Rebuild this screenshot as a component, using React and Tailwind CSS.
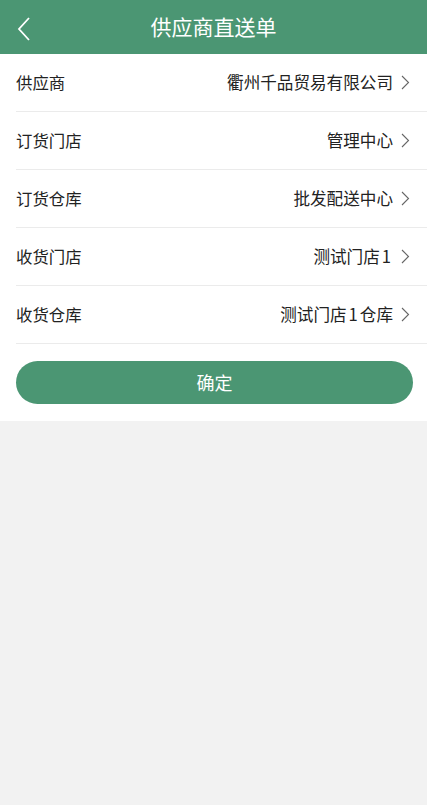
import React from "react";

const rows = [
  ["供应商", "衢州千品贸易有限公司"],
  ["订货门店", "管理中心"],
  ["订货仓库", "批发配送中心"],
  ["收货门店", ["测试门店", "1", ""]],
  ["收货仓库", ["测试门店", "1", "仓库"]],
];

function Chevron() {
  return (
    <svg width="9" height="15" viewBox="0 0 9 15" className="ml-[8px] shrink-0">
      <path d="M1 1 L7.5 7.5 L1 14" fill="none" stroke="#666" strokeWidth="1.1" />
    </svg>
  );
}

export default function App() {
  return (
    <div
      className="min-h-[805px] w-full bg-[#f2f2f2]"
      style={{ fontFamily: '"Noto Sans CJK SC", "Noto Sans", sans-serif' }}
    >
      <div className="relative flex h-[54px] items-center justify-center bg-[#4b9673]">
        <svg width="14" height="24" viewBox="0 0 14 24" className="absolute left-[17px] top-[17px]">
          <path d="M12 1 L2 12 L12 23" fill="none" stroke="#fff" strokeWidth="1.8" />
        </svg>
        <span className="text-[21px] text-white">供应商直送单</span>
      </div>
      <div className="bg-white pb-[17px]">
        {rows.map(([k, v]) => (
          <div key={k} className="ml-[16px] flex h-[58px] items-center border-b border-[#ebebeb] pr-[17px]">
            <span className="text-[16.4px] text-[#222]">{k}</span>
            <div className="ml-auto flex items-center">
              {typeof v === "string" ? (
                <span className="text-[16.6px] text-[#222]">{v}</span>
              ) : (
                <span className="text-[16.6px] text-[#222]">
                  {v[0]}
                  <span className="mx-[2px]">{v[1]}</span>
                  {v[2]}
                </span>
              )}
              <Chevron />
            </div>
          </div>
        ))}
        <div className="pl-[16px] pr-[14px] pt-[17px]">
          <button className="flex h-[43px] w-full items-center justify-center rounded-full bg-[#4b9673] text-[18px] text-white">
            确定
          </button>
        </div>
      </div>
    </div>
  );
}
